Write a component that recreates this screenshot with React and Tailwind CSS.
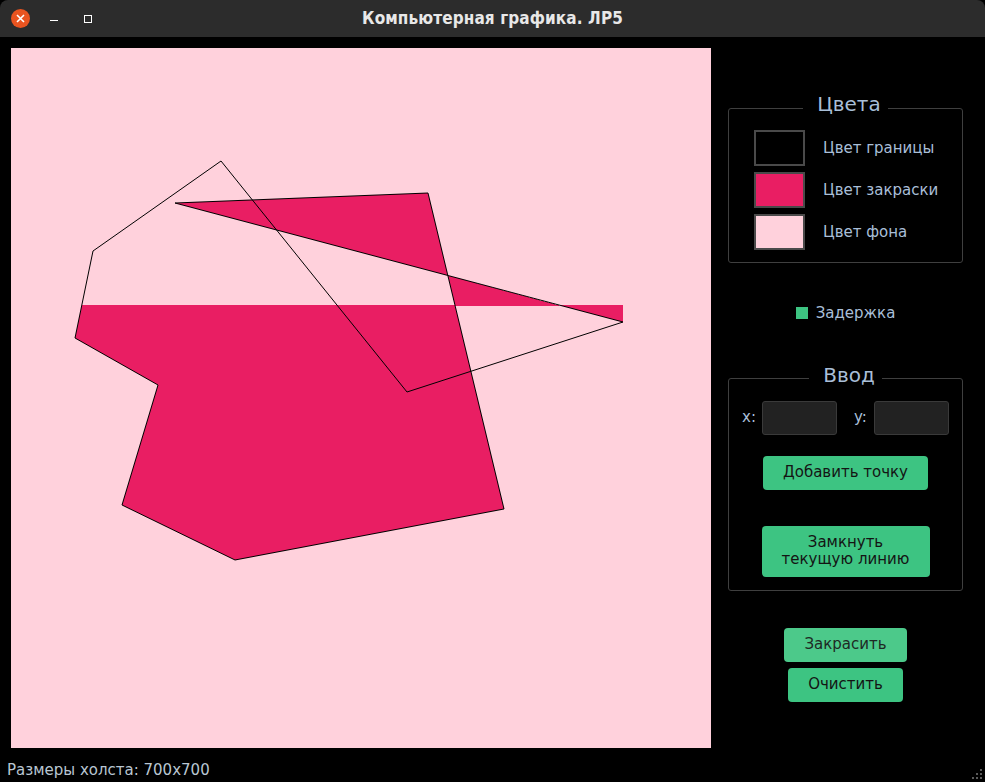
import React from "react";

const FONT = { fontFamily: '"DejaVu Sans", "Noto Sans", sans-serif' };

// outline of the polygon, in screen coordinates (canvas origin = 11,48)
const RAW_OUTLINE = [
  [221, 161], [407, 392], [623, 322], [175, 203], [428, 193], [504, 509],
  [235, 560], [122, 505], [158, 385], [75, 338], [93, 251],
];
const shift = (pts) => pts.map(([x, y]) => `${x - 11},${y - 48}`).join(" ");

const FILLED = [
  [[81.8, 305], [454.9, 305], [504, 509], [235, 560], [122, 505], [158, 385], [75, 338]],
  [[559, 305], [623, 305], [623, 322]],
  [[175, 203], [428, 193], [447.8, 275.5]],
  [[447.8, 275.5], [559, 305.5], [454.9, 305.5]],
];

function Swatch({ color, label }) {
  return (
    <div className="flex items-center gap-[18px]">
      <div className="w-[51px] h-[36px] border-2 border-[#4a4a4a]" style={{ background: color }} />
      <span className="text-[15px] text-[#a9bfd8]">{label}</span>
    </div>
  );
}

function GreenButton({ children, className }) {
  return (
    <button className={`bg-[#3dc482] text-[#141414] text-[15px] leading-[17px] rounded-[4px] ${className}`}>
      {children}
    </button>
  );
}

function Legend({ children }) {
  return <legend className="mx-auto pl-[14px] pr-[7px] pb-[8px] text-[20px] leading-[24px] text-[#a9bfd8]">{children}</legend>;
}

export default function App() {
  return (
    <div className="w-[985px] h-[782px] flex flex-col bg-black overflow-hidden" style={FONT}>
      {/* title bar */}
      <div className="h-[37px] bg-[#2c2c2c] rounded-t-[8px] flex items-center relative shrink-0">
        <div className="flex items-center ml-[11px]">
          <div className="w-[19px] h-[19px] rounded-full bg-[#e95420] flex items-center justify-center">
            <svg width="9" height="9" viewBox="0 0 9 9"><path d="M1 1L8 8M8 1L1 8" stroke="#fff" strokeWidth="1.6" /></svg>
          </div>
          <div className="w-[8px] h-[1.5px] bg-white mt-[4px] ml-[20px]" />
          <div className="w-[8px] h-[8px] border border-white ml-[26px]" />
        </div>
        <div className="absolute inset-0 flex items-center justify-center text-[#e8e8e8] text-[17px] font-bold tracking-[0.1px]" style={{ fontFamily: '"DejaVu Sans Condensed", "DejaVu Sans", sans-serif' }}>
          Компьютерная графика. ЛР5
        </div>
      </div>

      {/* body */}
      <div className="flex flex-1">
        <div className="pl-[11px] pt-[11px]">
          <svg width="700" height="700" className="block bg-[#ffd1dc]">
            {FILLED.map((p, i) => (
              <polygon key={i} points={shift(p)} fill="#e91e63" shapeRendering="crispEdges" />
            ))}
            <polygon points={shift(RAW_OUTLINE)} fill="none" stroke="#000" strokeWidth="1" />
          </svg>
        </div>

        <div className="flex flex-col pl-[17px] pt-[55px] w-[252px]">
          <fieldset className="border border-[#3f3f3f] rounded-[3px] w-[235px] pt-[6px] pb-[12px]">
            <Legend>Цвета</Legend>
            <div className="flex flex-col gap-[6px] pl-[25px]">
              <Swatch color="#000000" label="Цвет границы" />
              <Swatch color="#e91e63" label="Цвет закраски" />
              <Swatch color="#ffd1dc" label="Цвет фона" />
            </div>
          </fieldset>

          <div className="flex items-center justify-center gap-[8px] mt-[39px]">
            <div className="w-[12px] h-[12px] bg-[#3dc482]" />
            <span className="text-[15px] text-[#a9bfd8]">Задержка</span>
          </div>

          <fieldset className="border border-[#3f3f3f] rounded-[3px] w-[235px] mt-[38px] pt-[6px] pb-[13px] flex flex-col items-center">
            <Legend>Ввод</Legend>
            <div className="flex items-center self-stretch pl-[13px]">
              <span className="text-[15px] text-[#a9bfd8] w-[20px]">x:</span>
              <div className="w-[75px] h-[34px] bg-[#222] border border-[#3a3a3a] rounded-[3px]" />
              <span className="text-[15px] text-[#a9bfd8] w-[20px] ml-[17px]">y:</span>
              <div className="w-[75px] h-[34px] bg-[#222] border border-[#3a3a3a] rounded-[3px]" />
            </div>
            <GreenButton className="w-[165px] h-[34px] mt-[21px]">Добавить точку</GreenButton>
            <GreenButton className="w-[168px] h-[51px] mt-[36px]">Замкнуть<br />текущую линию</GreenButton>
          </fieldset>

          <div className="flex flex-col items-center w-[235px] mt-[37px] gap-[6px]">
            <button className="bg-[#4cc98a] text-[#1e2a24] text-[15px] rounded-[4px] w-[123px] h-[34px]">Закрасить</button>
            <GreenButton className="w-[115px] h-[34px]">Очистить</GreenButton>
          </div>
        </div>
      </div>

      {/* status bar */}
      <div className="h-[34px] shrink-0 flex items-end pb-[1px] pl-[7px] relative">
        <span className="text-[15px] text-[#b9c6d2]">Размеры холста: 700x700</span>
        <svg width="12" height="12" className="absolute right-[2px] bottom-[2px]">
          {[[10, 2], [10, 6], [6, 6], [10, 10], [6, 10], [2, 10]].map(([x, y], i) => (
            <rect key={i} x={x - 1} y={y - 1} width="2" height="2" fill="#5a5a5a" />
          ))}
        </svg>
      </div>
    </div>
  );
}
